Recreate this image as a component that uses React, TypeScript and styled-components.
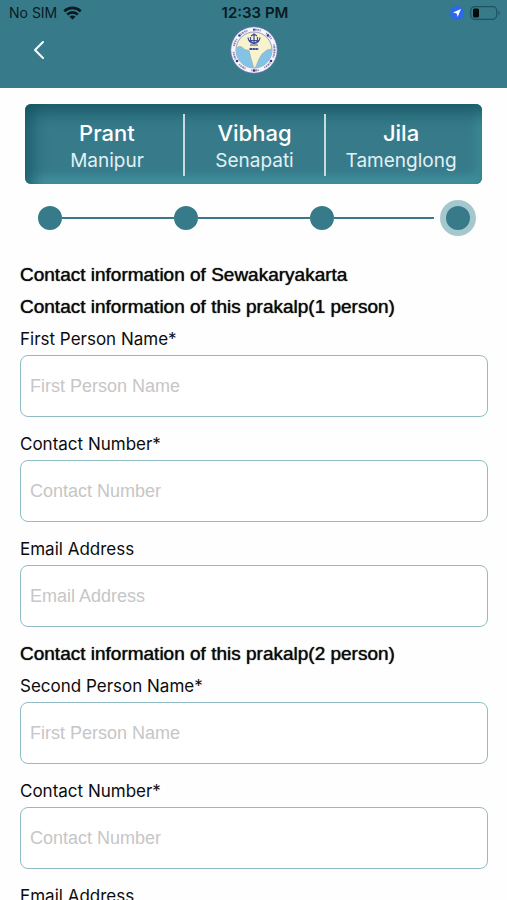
import React, { useId } from "react";
import styled, { createGlobalStyle } from "styled-components";

const teal = "#377b8b";

const GlobalStyle = createGlobalStyle`
  *, *::before, *::after { box-sizing: border-box; }
  body {
    margin: 0;
    background: #fefefe;
    color: #0c0c0c;
    font-family: Inter, "Noto Sans", sans-serif;
  }
`;

const Screen = styled.div`
  display: flex;
  flex-direction: column;
  height: 100vh;
  overflow: hidden;
`;

const Header = styled.header`
  flex: none;
  padding-bottom: 14px;
  background: ${teal};
`;

const StatusBar = styled.div`
  display: grid;
  grid-template-columns: 1fr auto 1fr;
  align-items: center;
  height: 26px;
  padding: 0 6px 0 9px;
  color: #0a1a20;
  font-size: 14px;
  line-height: 26px;
`;

const StatusGroup = styled.div<{ $end?: boolean }>`
  display: flex;
  align-items: center;
  justify-content: ${(p) => (p.$end ? "flex-end" : "flex-start")};
  gap: 6px;
`;

const Clock = styled.time`
  font-size: 15px;
  font-weight: 600;
`;

const NavBar = styled.nav`
  display: grid;
  grid-template-columns: 1fr auto 1fr;
  align-items: center;
  height: 48px;
  padding: 0 23px;
`;

const BackButton = styled.button`
  display: flex;
  align-items: center;
  justify-content: center;
  justify-self: start;
  width: 32px;
  height: 32px;
  padding: 0;
  border: 0;
  background: none;
  color: #fff;
  cursor: pointer;
`;

const Main = styled.main`
  flex: 1;
  min-height: 0;
  padding-top: 16px;
  overflow-y: auto;
  scrollbar-width: none;
`;

const RegionCard = styled.dl`
  display: grid;
  grid-template-columns: 14fr 13fr 14fr;
  height: 80px;
  margin: 0 25px;
  padding: 10px 6px;
  border-radius: 6px;
  background: ${teal};
  box-shadow:
    inset 5px 7px 18px #145361,
    inset -3px -5px 12px #4fa5b0;
  color: #fff;
  text-align: center;
`;

const Region = styled.div`
  padding-top: 6px;
  & + & { border-left: 2px solid #c5dbe0; }
`;

const RegionName = styled.dt`
  font-size: 22px;
  font-weight: 500;
  line-height: 26px;
`;

const RegionValue = styled.dd`
  margin: 0;
  color: #e2f0f4;
  font-size: 19px;
  line-height: 30px;
`;

const Stepper = styled.ol`
  display: flex;
  align-items: center;
  height: 36px;
  margin: 16px 0 23px;
  padding: 0 37px 0 38px;
  list-style: none;
`;

const Step = styled.li<{ $last: boolean }>`
  display: flex;
  align-items: center;
  flex: ${(p) => (p.$last ? "none" : "1")};
`;

const Dot = styled.span<{ $current: boolean }>`
  flex: none;
  width: 24px;
  height: 24px;
  border-radius: 50%;
  background: ${teal};
  box-shadow: ${(p) => (p.$current ? "0 0 0 6px #a5c8cf" : "none")};
`;

const Connector = styled.span<{ $beforeCurrent: boolean }>`
  flex: 1;
  height: 2px;
  margin-right: ${(p) => (p.$beforeCurrent ? "12px" : "0")};
  background: ${teal};
`;

const Form = styled.form`
  padding: 0 19px 16px 20px;
`;

const Heading = styled.h2`
  margin: 0;
  font-family: "Liberation Sans", Arial, sans-serif;
  font-size: 19px;
  font-weight: 400;
  line-height: 32px;
  text-shadow: 0 0 1px currentColor;
`;

const Field = styled.div`
  margin-bottom: 11px;
`;

const Label = styled.label`
  display: block;
  font-size: 17px;
  line-height: 32px;
`;

const Input = styled.input`
  display: block;
  width: 100%;
  height: 62px;
  padding: 0 9px;
  border: 1px solid #8fbcc4;
  border-radius: 8px;
  background: #fff;
  color: #0c0c0c;
  font-family: "Liberation Sans", Arial, sans-serif;
  font-size: 18px;
  &::placeholder { color: #c6c6c6; opacity: 1; }
`;

function WifiIcon() {
  return (
    <svg width="19" height="14" viewBox="0 0 19 14" fill="none" stroke="currentColor" strokeWidth="2.6" aria-label="Wi-Fi">
      <path d="M1.3 5.3a11.6 11.6 0 0 1 16.4 0" />
      <path d="M4.2 8.6a7.5 7.5 0 0 1 10.600 0" />
      <path d="M9.5 13.6 6.500 10.700a4.200 4.200 0 0 1 6 0Z" fill="currentColor" stroke="none" />
    </svg>
  );
}

function LocationIcon() {
  return (
    <svg width="14" height="14" viewBox="0 0 14 14" aria-label="Location in use">
      <circle cx="7" cy="7" r="7" fill="#2c68ea" />
      <path d="M11 3 7.6 11 6.7 7.4 3 6.5Z" fill="#fff" />
    </svg>
  );
}

function BatteryIcon() {
  return (
    <svg width="31" height="14" viewBox="0 0 31 14" aria-label="Battery low">
      <rect x=".7" y=".7" width="26" height="12.6" rx="4" fill="none" stroke="#1d5361" strokeWidth="1.2" />
      <rect x="3" y="2.5" width="6" height="9" rx="1.5" fill="#050b0d" />
      <path d="M28.5 4.8v4.4c1.8-.8 1.8-3.6 0-4.4Z" fill="#1d5361" />
    </svg>
  );
}

function BackIcon() {
  return (
    <svg width="12" height="20" viewBox="0 0 12 20" fill="none" stroke="currentColor" strokeWidth="2" strokeLinecap="round" strokeLinejoin="round">
      <path d="M10 2 2 10l8 8" />
    </svg>
  );
}

function Emblem() {
  return (
    <svg width="48" height="48" viewBox="0 0 48 48" role="img" aria-label="Organisation emblem">
      <circle cx="24" cy="24" r="23.300" fill="#f6f6fb" stroke="#626aa8" strokeWidth=".8" />
      <circle cx="24" cy="24" r="20.500" fill="none" stroke="#555b9c" strokeWidth="2" strokeDasharray="1 .6 2 .7 1.500 .8 1 6" opacity=".7" />
      <circle cx="24" cy="24" r="18" fill="#f8f3cf" stroke="#8287b4" strokeWidth=".8" />
      <path d="M6.500 22c3-3 6-1 8 1.500 2 0 3 1 4.500 1l2 8 2.500 8.500-1 .8C14 41 7 34 6.300 25Z" fill="#83c4e6" />
      <path d="M25.500 41.500 29 33l3-5 5-4 4.500-1c1 10-7 18.500-16 18.500Z" fill="#83c4e6" />
      <path d="M6.500 22c3-3 6-1 8 1.500 2 0 3 1 4.500 1l2 8 2.500 8.500M25.500 41.500 29 33l3-5 5-4 4.500-1" fill="none" stroke="#a2a9b5" strokeWidth=".7" />
      <g fill="none" stroke="#424b96" strokeWidth="1.200">
        <path d="M18 11.500c1 8 11 8 12 0M20.500 11v4c1 2 6 2 7 0v-4M24 8V18M19 14.500h10M20 19h8M21 10l3-2 3 2" />
        <path d="M19.500 23h9" strokeWidth="2.200" strokeDasharray="2.500 .4" />
      </g>
      <g fill="#34398e">
        <circle cx="24" cy="3.800" r="1" />
        <circle cx="9.500" cy="9.500" r="1.300" />
        <circle cx="38" cy="9.500" r="1.300" />
        <circle cx="7" cy="35" r="1.300" />
        <circle cx="41" cy="35" r="1.300" />
        <circle cx="24" cy="44.500" r="1.300" />
      </g>
    </svg>
  );
}

type FieldSpec = { label: string; placeholder: string; type: string };
type Person = { heading: string; fields: FieldSpec[] };

const regions = [
  { name: "Prant", value: "Manipur" },
  { name: "Vibhag", value: "Senapati" },
  { name: "Jila", value: "Tamenglong" },
];

const steps = [1, 2, 3, 4];
const currentStep = 4;

const contactFields: FieldSpec[] = [
  { label: "Contact Number*", placeholder: "Contact Number", type: "tel" },
  { label: "Email Address", placeholder: "Email Address", type: "email" },
];

const people: Person[] = [
  {
    heading: "Contact information of this prakalp(1 person)",
    fields: [{ label: "First Person Name*", placeholder: "First Person Name", type: "text" }, ...contactFields],
  },
  {
    heading: "Contact information of this prakalp(2 person)",
    fields: [{ label: "Second Person Name*", placeholder: "First Person Name", type: "text" }, ...contactFields],
  },
];

function TextField({ label, placeholder, type }: FieldSpec) {
  const id = useId();
  return (
    <Field>
      <Label htmlFor={id}>{label}</Label>
      <Input id={id} type={type} placeholder={placeholder} />
    </Field>
  );
}

export default function App() {
  return (
    <Screen>
      <GlobalStyle />
      <Header>
        <StatusBar>
          <StatusGroup>
            No SIM
            <WifiIcon />
          </StatusGroup>
          <Clock>12:33 PM</Clock>
          <StatusGroup $end>
            <LocationIcon />
            <BatteryIcon />
          </StatusGroup>
        </StatusBar>
        <NavBar>
          <BackButton type="button" aria-label="Back">
            <BackIcon />
          </BackButton>
          <Emblem />
        </NavBar>
      </Header>
      <Main>
        <RegionCard>
          {regions.map((r) => (
            <Region key={r.name}>
              <RegionName>{r.name}</RegionName>
              <RegionValue>{r.value}</RegionValue>
            </Region>
          ))}
        </RegionCard>
        <Stepper>
          {steps.map((n) => (
            <Step key={n} $last={n === steps.length} aria-current={n === currentStep ? "step" : undefined}>
              <Dot $current={n === currentStep} />
              {n < steps.length && <Connector $beforeCurrent={n + 1 === currentStep} />}
            </Step>
          ))}
        </Stepper>
        <Form>
          <Heading>Contact information of Sewakaryakarta</Heading>
          {people.map((p) => (
            <section key={p.heading}>
              <Heading>{p.heading}</Heading>
              {p.fields.map((f) => (
                <TextField key={f.label} {...f} />
              ))}
            </section>
          ))}
        </Form>
      </Main>
    </Screen>
  );
}
